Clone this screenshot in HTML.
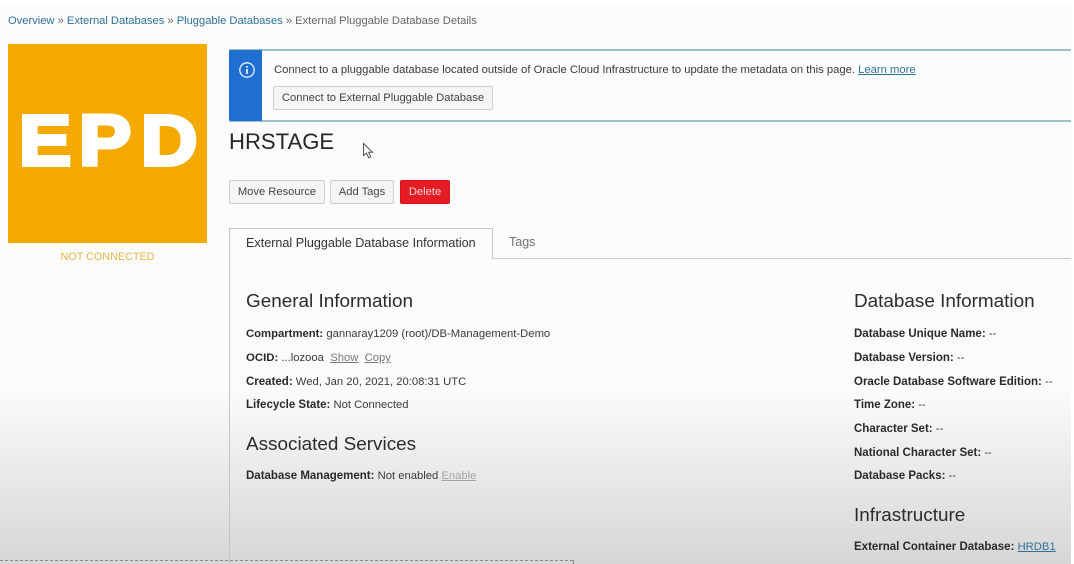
<!DOCTYPE html>
<html lang="en">
<head>
<meta charset="utf-8">
<title>External Pluggable Database Details</title>
<style>
html,body{margin:0;padding:0;width:1074px;height:564px;overflow:hidden;background:#fff}
body{position:relative;font-family:"Liberation Sans",Arial,sans-serif;font-size:11.25px;color:#3a3a3a}
#bg{position:absolute;left:0;top:6px;width:1071px;height:558px;background:linear-gradient(to bottom,#fbfbfb 0,#fbfbfb 385px,#d6d6d6 558px)}
.t{position:absolute;white-space:nowrap;line-height:14px;filter:blur(.3px)}
a{color:#2f7298;text-decoration:none}
a.u{text-decoration:underline}
b{color:#2a2a2a;font-size:11.5px}
.h{font-size:18.9px;line-height:22px;color:#2c2c2c}
.btn{position:absolute;box-sizing:border-box;height:24px;border:1px solid #cfcfcf;border-radius:2px;background:#f5f5f5;color:#444;font-size:11.2px;line-height:23px;text-align:center;white-space:nowrap}
.abs{position:absolute}
.e{position:absolute;top:100px;color:#fff;font-weight:bold;font-size:71px;line-height:84px;-webkit-text-stroke:4px #fff;transform:scaleX(1.1);transform-origin:0 50%}
</style>
</head>
<body>
<div id="bg"></div>

<div class="t" style="left:8px;top:14px;color:#666;font-size:11.17px"><a href="#">Overview</a> » <a href="#">External Databases</a> » <a href="#">Pluggable Databases</a> » External Pluggable Database Details</div>

<div class="abs" style="left:8px;top:44px;width:199px;height:199px;background:#f3a900"></div>
<div class="e" style="left:18.5px">E</div>
<div class="e" style="left:79px">P</div>
<div class="e" style="left:140.5px">D</div>
<div class="t" style="left:8px;top:250px;width:199px;text-align:center;color:#e6b84c;font-size:10.8px">NOT CONNECTED</div>

<div class="abs" style="left:229px;top:49px;width:842px;height:73px;box-sizing:border-box;border-top:2px solid #9cbfc8;border-bottom:2px solid #9cbfc8;background:#fcfcfc"></div>
<div class="abs" style="left:229px;top:50px;width:33px;height:71px;background:#1f6fd0;border-radius:2px 0 0 2px"></div>
<svg class="abs" style="left:238px;top:61px" width="18" height="18" viewBox="0 0 18 18"><circle cx="9" cy="9" r="7.2" fill="none" stroke="#eaf2fb" stroke-width="1.3"/><rect x="8.2" y="8" width="1.6" height="5" fill="#fff"/><rect x="8.2" y="5" width="1.6" height="1.7" fill="#fff"/></svg>
<div class="t" style="left:274px;top:63px;color:#3a3a3a">Connect to a pluggable database located outside of Oracle Cloud Infrastructure to update the metadata on this page. <a class="u" href="#">Learn more</a></div>
<div class="btn" style="left:273px;top:86px;width:220px">Connect to External Pluggable Database</div>

<div class="t" style="left:229px;top:128px;font-size:22.1px;line-height:28px;color:#262626">HRSTAGE</div>
<svg class="abs" style="left:362px;top:142px" width="13" height="18" viewBox="0 0 13 18"><path d="M1.5 1.5V13.5L4.5 11L6.7 15.8L8.7 14.9L6.6 10.3H10.5Z" fill="#fff" stroke="#555" stroke-width="1"/></svg>

<div class="btn" style="left:229px;top:180px;width:96px">Move Resource</div>
<div class="btn" style="left:330px;top:180px;width:64px">Add Tags</div>
<div class="btn" style="left:400px;top:180px;width:50px;background:#e41c23;border-color:#d5141b;color:#f6d5d5">Delete</div>

<div class="abs" style="left:229px;top:258px;width:842px;height:1px;background:#c9c9c9"></div>
<div class="abs" style="left:229px;top:228px;width:264px;height:336px;box-sizing:border-box;border:1px solid #c4c4c4;border-bottom:0;border-right:0"></div>
<div class="abs" style="left:230px;top:229px;width:263px;height:30px;background:#fbfbfb"></div>
<div class="abs" style="left:492px;top:228px;width:1px;height:31px;background:#c4c4c4"></div>
<div class="t" style="left:246px;top:236px;color:#333;font-size:12.6px">External Pluggable Database Information</div>
<div class="t" style="left:509px;top:235px;color:#707070;font-size:12.5px">Tags</div>

<div class="t h" style="left:246px;top:291px">General Information</div>
<div class="t" style="left:246px;top:327px"><b style="font-size:11.3px">Compartment:</b> gannaray1209 (root)/DB-Management-Demo</div>
<div class="t" style="left:246px;top:351px"><b style="font-size:11.4px">OCID:</b> ...lozooa &nbsp;<a class="u" href="#" style="color:#777">Show</a> &nbsp;<a class="u" href="#" style="color:#777">Copy</a></div>
<div class="t" style="left:246px;top:375px"><b>Created:</b> Wed, Jan 20, 2021, 20:08:31 UTC</div>
<div class="t" style="left:246px;top:398px"><b>Lifecycle State:</b> Not Connected</div>
<div class="t h" style="left:246px;top:434px">Associated Services</div>
<div class="t" style="left:246px;top:469px"><b>Database Management:</b> Not enabled <a class="u" href="#" style="color:#a5a5a5">Enable</a></div>

<div class="t h" style="left:854px;top:291px">Database Information</div>
<div class="t" style="left:854px;top:327px"><b>Database Unique Name:</b> --</div>
<div class="t" style="left:854px;top:351px"><b>Database Version:</b> --</div>
<div class="t" style="left:854px;top:375px"><b>Oracle Database Software Edition:</b> --</div>
<div class="t" style="left:854px;top:398px"><b>Time Zone:</b> --</div>
<div class="t" style="left:854px;top:422px"><b>Character Set:</b> --</div>
<div class="t" style="left:854px;top:446px"><b>National Character Set:</b> --</div>
<div class="t" style="left:854px;top:469px"><b>Database Packs:</b> --</div>
<div class="t h" style="left:854px;top:505px">Infrastructure</div>
<div class="t" style="left:854px;top:540px"><b>External Container Database:</b> <a class="u" href="#">HRDB1</a></div>

<div class="abs" style="left:0;top:560px;width:573px;height:0;border-top:1px dashed #8a8a8a"></div>
<div class="abs" style="left:573px;top:560px;width:0;height:4px;border-left:1px dashed #8a8a8a"></div>
</body>
</html>
